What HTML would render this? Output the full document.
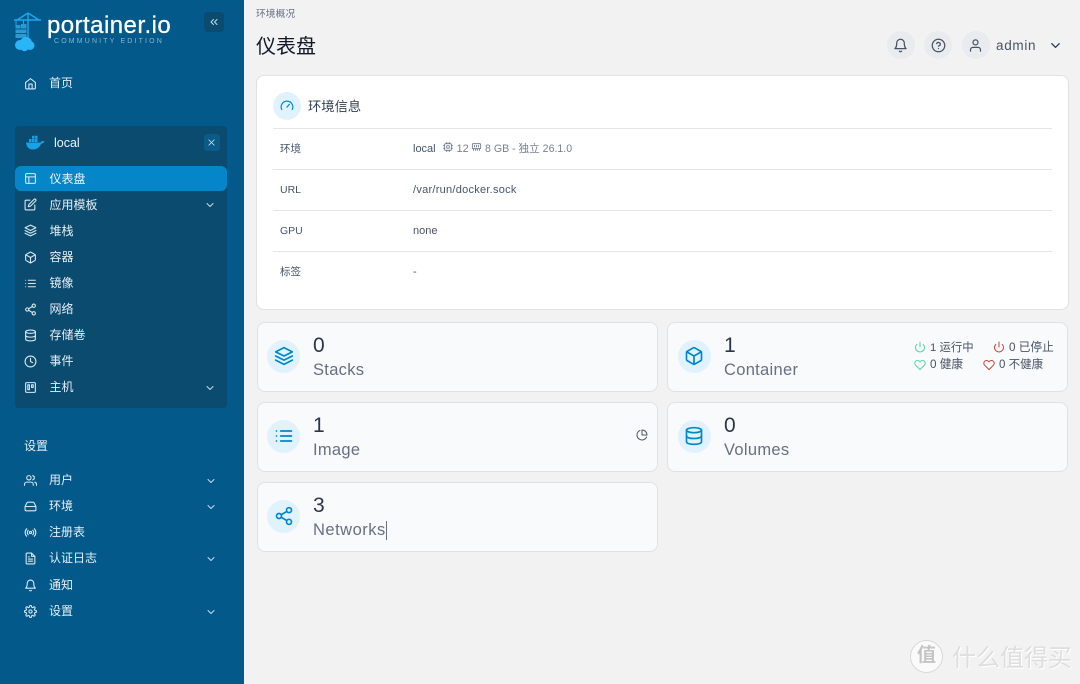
<!DOCTYPE html>
<html><head><meta charset="utf-8">
<style>
*{box-sizing:border-box}
html,body{margin:0;padding:0}
body{width:1080px;height:684px;overflow:hidden;background:#f2f2f2;position:relative;font-family:"Liberation Sans","Noto Sans CJK SC",sans-serif;color:#344054}
.a,.t,svg{position:absolute}
.t{white-space:nowrap;line-height:20px}
.n{color:#e6eff5;font-size:12px;left:49.5px;height:20px}
.i{fill:none;stroke:#dbe8f0;stroke-width:2;stroke-linecap:round;stroke-linejoin:round;width:13px;height:13px;left:23.5px}
.c{fill:none;stroke:#c9dce8;stroke-width:2;stroke-linecap:round;stroke-linejoin:round;width:12px;height:12px;left:204px}
.card{position:absolute;background:#f9fafb;border:1px solid #dfe1e5;border-radius:8px;width:401px;height:70px}
.circ{position:absolute;width:33px;height:33px;border-radius:50%;background:#e0f2fe}
.ci{fill:none;stroke:#0086c9;stroke-width:2;stroke-linecap:round;stroke-linejoin:round;width:20px;height:20px}
.num{font-size:21px;color:#2d3648;line-height:24px}
.lab{font-size:16.5px;color:#667085;line-height:22px;letter-spacing:.3px}
.hr{position:absolute;left:273px;width:779px;height:1px;background:#e4e5e8}
.k{font-size:10.5px;color:#475467;left:280px}
.v{font-size:11px;color:#475467;left:413px}
.s{font-size:11.5px;color:#475467}
.hb{position:absolute;width:28px;height:28px;border-radius:50%;background:#e9ebef;top:31px}
.hi{fill:none;stroke:#475467;stroke-width:2;stroke-linecap:round;stroke-linejoin:round;width:15px;height:15px}
.w{color:#dedede;font-weight:400;text-shadow:1px 1px 0 #fff}
</style></head><body>

<div class="a" style="left:0;top:0;width:244px;height:684px;background:#02598a"></div>
<div class="a" style="left:15px;top:126px;width:212px;height:282px;background:#0a4b6f;border-radius:4px"></div>
<div class="a" style="left:15px;top:166px;width:212px;height:25px;background:#0486c9;border-radius:6px"></div>

<!-- logo -->
<svg style="left:14px;top:12px;width:28px;height:40px" viewBox="0 0 28 40">
<path d="M0 8H27M14 1V26M14 1L3 8M14 1L25 8" fill="none" stroke="#1aa7ec" stroke-width="1.4"/>
<path d="M1.500 8h1v5h-1zM9 8h1v4H9z" fill="#1aa7ec"/>
<rect x="1.500" y="13" width="5" height="3.500" fill="#2a9ad4"/><rect x="7" y="12" width="5.500" height="4.500" fill="#2a9ad4"/><rect x="1.500" y="17.500" width="11" height="3.500" fill="#2a9ad4"/><rect x="1.500" y="22" width="11" height="4" fill="#2a9ad4"/>
<circle cx="6" cy="33" r="5" fill="#29b5f6"/><circle cx="12" cy="31" r="6" fill="#29b5f6"/><circle cx="16" cy="33.500" r="4.500" fill="#29b5f6"/><circle cx="10.500" cy="35.500" r="3.800" fill="#29b5f6"/>
</svg>
<div class="t" style="left:47px;top:12px;font-size:24px;line-height:28px;color:#fff;letter-spacing:.45px;-webkit-text-stroke:.3px #fff">portainer.io</div>
<div class="t" style="left:54px;top:37px;font-size:7px;line-height:10px;color:#8fb4cc;letter-spacing:2.15px">COMMUNITY EDITION</div>
<div class="a" style="left:204px;top:12px;width:20px;height:20px;border-radius:4px;background:#0a4b6f"></div>
<svg class="i" style="left:208px;top:16px;width:12px;height:12px;stroke:#c9dce8" viewBox="0 0 24 24"><path d="M11 17l-5-5 5-5M18 17l-5-5 5-5"/></svg>

<svg class="i" style="top:76.500px" viewBox="0 0 24 24"><path d="M3 10l9-7 9 7v10a2 2 0 0 1-2 2H5a2 2 0 0 1-2-2z"/><path d="M9 22v-9h6v9"/></svg>
<div class="t n" style="top:73px;left:49px">首页</div>

<!-- local -->
<svg style="left:26px;top:135px;width:19px;height:15px" viewBox="0 0 19 15"><path d="M0 7.500h14.500c.6-1.500 2-1.800 4-1.200-.8 1.700-2 2.400-3.400 2.500C13.800 12.500 10.500 14.500 7 14.500 2.500 14.500.3 11.500 0 7.500z" fill="#1aa0e6"/><path d="M3 4h2.500v3H3zM6 4h2.500v3H6zM9 4h2.500v3H9zM6 .8h2.500v3H6zM9 .8h2.500v3H9z" fill="#1aa0e6"/></svg>
<div class="t" style="left:54px;top:133px;font-size:12.5px;color:#eef4f8">local</div>
<div class="a" style="left:204px;top:134px;width:16px;height:17px;border-radius:3px;background:#0b5b88"></div>
<svg class="i" style="left:208px;top:139px;width:7px;height:7px;stroke:#c9dce8;stroke-width:3" viewBox="0 0 24 24"><path d="M3 3l18 18M21 3L3 21"/></svg>

<svg class="i" style="top:171.500px" viewBox="0 0 24 24"><rect x="3" y="3" width="18" height="18" rx="2"/><path d="M3 9h18M9 21V9"/></svg>
<div class="t n" style="top:169px;color:#f0f7fb">仪表盘</div>
<svg class="i" style="top:197.500px" viewBox="0 0 24 24"><path d="M11 4H4a2 2 0 0 0-2 2v14a2 2 0 0 0 2 2h14a2 2 0 0 0 2-2v-7"/><path d="M18.500 2.500a2.100 2.100 0 0 1 3 3L12 15l-4 1 1-4z"/></svg>
<div class="t n" style="top:195px">应用模板</div>
<svg class="c" style="top:199px" viewBox="0 0 24 24"><path d="M6 9l6 6 6-6"/></svg>
<svg class="i" style="top:223.500px" viewBox="0 0 24 24"><path d="M12 2L2 7l10 5 10-5z"/><path d="M2 12l10 5 10-5M2 17l10 5 10-5"/></svg>
<div class="t n" style="top:221px">堆栈</div>
<svg class="i" style="top:250.500px" viewBox="0 0 24 24"><path d="M21 16V8a2 2 0 0 0-1-1.700l-7-4a2 2 0 0 0-2 0l-7 4A2 2 0 0 0 3 8v8a2 2 0 0 0 1 1.700l7 4a2 2 0 0 0 2 0l7-4a2 2 0 0 0 1-1.700z"/><path d="M3.300 7L12 12l8.700-5M12 22V12"/></svg>
<div class="t n" style="top:247px">容器</div>
<svg class="i" style="top:276.500px" viewBox="0 0 24 24"><path d="M8 6h13M8 12h13M8 18h13M3 6h.01M3 12h.01M3 18h.01"/></svg>
<div class="t n" style="top:273px">镜像</div>
<svg class="i" style="top:302.500px" viewBox="0 0 24 24"><circle cx="18" cy="5" r="3"/><circle cx="6" cy="12" r="3"/><circle cx="18" cy="19" r="3"/><path d="M8.600 13.500l6.800 4M15.400 6.500l-6.800 4"/></svg>
<div class="t n" style="top:299px">网络</div>
<svg class="i" style="top:328.500px" viewBox="0 0 24 24"><ellipse cx="12" cy="5" rx="9" ry="3"/><path d="M21 12c0 1.700-4 3-9 3s-9-1.300-9-3"/><path d="M3 5v14c0 1.700 4 3 9 3s9-1.300 9-3V5"/></svg>
<div class="t n" style="top:325px">存储卷</div>
<svg class="i" style="top:354.500px" viewBox="0 0 24 24"><circle cx="12" cy="12" r="10"/><path d="M12 6v6l4 2"/></svg>
<div class="t n" style="top:351px">事件</div>
<svg class="i" style="top:380.500px" viewBox="0 0 24 24"><rect x="3" y="3" width="18" height="18" rx="2"/><path d="M7 7h3v9H7zM14 7h3v5h-3z"/></svg>
<div class="t n" style="top:377px">主机</div>
<svg class="c" style="top:382px" viewBox="0 0 24 24"><path d="M6 9l6 6 6-6"/></svg>

<div class="t n" style="left:24px;top:436px">设置</div>

<svg class="i" style="top:473.500px" viewBox="0 0 24 24"><path d="M17 21v-2a4 4 0 0 0-4-4H5a4 4 0 0 0-4 4v2"/><circle cx="9" cy="7" r="4"/><path d="M23 21v-2a4 4 0 0 0-3-3.900M16 3.100a4 4 0 0 1 0 7.800"/></svg>
<div class="t n" style="top:470px;left:49px">用户</div>
<svg class="c" style="left:205px;top:475px" viewBox="0 0 24 24"><path d="M6 9l6 6 6-6"/></svg>
<svg class="i" style="top:499.500px" viewBox="0 0 24 24"><path d="M22 12H2M5.500 5L2 12v6a2 2 0 0 0 2 2h16a2 2 0 0 0 2-2v-6l-3.500-7A2 2 0 0 0 16.700 4H7.300a2 2 0 0 0-1.800 1z"/></svg>
<div class="t n" style="top:496px;left:49px">环境</div>
<svg class="c" style="left:205px;top:501px" viewBox="0 0 24 24"><path d="M6 9l6 6 6-6"/></svg>
<svg class="i" style="top:526px" viewBox="0 0 24 24"><circle cx="12" cy="12" r="2"/><path d="M16.200 7.800a6 6 0 0 1 0 8.400M7.800 16.200a6 6 0 0 1 0-8.400M19 5a10 10 0 0 1 0 14M5 19A10 10 0 0 1 5 5"/></svg>
<div class="t n" style="top:522px;left:49px">注册表</div>
<svg class="i" style="top:552px" viewBox="0 0 24 24"><path d="M14 2H6a2 2 0 0 0-2 2v16a2 2 0 0 0 2 2h12a2 2 0 0 0 2-2V8z"/><path d="M14 2v6h6M16 13H8M16 17H8M10 9H8"/></svg>
<div class="t n" style="top:548px;left:49px">认证日志</div>
<svg class="c" style="left:205px;top:553px" viewBox="0 0 24 24"><path d="M6 9l6 6 6-6"/></svg>
<svg class="i" style="top:578.500px" viewBox="0 0 24 24"><path d="M18 8a6 6 0 0 0-12 0c0 7-3 9-3 9h18s-3-2-3-9"/><path d="M13.700 21a2 2 0 0 1-3.400 0"/></svg>
<div class="t n" style="top:575px;left:49px">通知</div>
<svg class="i" style="top:604.500px" viewBox="0 0 24 24"><circle cx="12" cy="12" r="3"/><path d="M19.400 15a1.700 1.700 0 0 0 .3 1.800l.1.100a2 2 0 1 1-2.800 2.800l-.1-.1a1.700 1.700 0 0 0-2.900 1.200V21a2 2 0 1 1-4 0v-.1a1.700 1.700 0 0 0-2.900-1.200l-.1.100a2 2 0 1 1-2.800-2.800l.1-.1a1.700 1.700 0 0 0-1.200-2.900H3a2 2 0 1 1 0-4h.1a1.700 1.700 0 0 0 1.200-2.900l-.1-.1a2 2 0 1 1 2.800-2.800l.1.100a1.700 1.700 0 0 0 2.900-1.200V3a2 2 0 1 1 4 0v.1a1.700 1.700 0 0 0 2.900 1.200l.1-.1a2 2 0 1 1 2.800 2.800l-.1.100a1.700 1.700 0 0 0 1.200 2.900h.1a2 2 0 1 1 0 4h-.1a1.700 1.700 0 0 0-1.500 1z"/></svg>
<div class="t n" style="top:601px;left:49px">设置</div>
<svg class="c" style="left:205px;top:606px" viewBox="0 0 24 24"><path d="M6 9l6 6 6-6"/></svg>

<!-- header -->
<div class="t" style="left:256px;top:5px;font-size:9.800px;color:#667085">环境概况</div>
<div class="t" style="left:256px;top:32px;font-size:20px;line-height:30px;color:#111827">仪表盘</div>
<div class="hb" style="left:887px"></div>
<svg class="hi" style="left:893px;top:38px" viewBox="0 0 24 24"><path d="M18 8a6 6 0 0 0-12 0c0 7-3 9-3 9h18s-3-2-3-9"/><path d="M13.700 21a2 2 0 0 1-3.400 0"/></svg>
<div class="hb" style="left:924px"></div>
<svg class="hi" style="left:931px;top:38px" viewBox="0 0 24 24"><circle cx="12" cy="12" r="10"/><path d="M9.100 9a3 3 0 0 1 5.800 1c0 2-3 3-3 3M12 17h.01"/></svg>
<div class="hb" style="left:962px"></div>
<svg class="hi" style="left:968px;top:38px" viewBox="0 0 24 24"><path d="M20 21v-2a4 4 0 0 0-4-4H8a4 4 0 0 0-4 4v2"/><circle cx="12" cy="7" r="4"/></svg>
<div class="t" style="left:996px;top:36px;font-size:13.500px;color:#475467;letter-spacing:.7px">admin</div>
<svg class="hi" style="left:1048px;top:38px;stroke:#344054" viewBox="0 0 24 24"><path d="M6 9l6 6 6-6"/></svg>

<!-- env card -->
<div class="a" style="left:256px;top:75px;width:813px;height:235px;background:#fff;border:1px solid #dfe1e5;border-radius:8px"></div>
<div class="circ" style="left:273px;top:92px;width:28px;height:28px"></div>
<svg class="ci" style="left:280px;top:99px;width:14px;height:14px" viewBox="0 0 24 24"><path d="M3 18a10 10 0 1 1 18 0M12 14l4-5"/></svg>
<div class="t" style="left:308px;top:96px;font-size:13.300px;line-height:21px;color:#344054">环境信息</div>
<div class="hr" style="top:128px"></div>
<div class="hr" style="top:169px"></div>
<div class="hr" style="top:210px"></div>
<div class="hr" style="top:251px"></div>
<div class="t k" style="top:139px">环境</div>
<div class="t k" style="top:180px">URL</div>
<div class="t k" style="top:221px">GPU</div>
<div class="t k" style="top:262px">标签</div>
<div class="t v" style="top:139px">local</div>
<svg class="hi" style="left:443px;top:142px;width:10px;height:10px;stroke:#667085" viewBox="0 0 24 24"><rect x="4" y="4" width="16" height="16" rx="2"/><rect x="9" y="9" width="6" height="6"/><path d="M9 1v3M15 1v3M9 20v3M15 20v3M1 9h3M1 15h3M20 9h3M20 15h3"/></svg>
<div class="t v" style="left:456.500px;top:139px;color:#7a828f">12</div>
<svg class="hi" style="left:471px;top:142px;width:11px;height:10px;stroke:#667085" viewBox="0 0 24 24"><rect x="2" y="4" width="20" height="12" rx="2"/><path d="M7 8v4M12 8v4M17 8v4M5 20v-3M10 20v-3M14 20v-3M19 20v-3"/></svg>
<div class="t v" style="left:485px;top:139px;font-size:10.600px;color:#7a828f">8 GB - 独立 26.1.0</div>
<div class="t v" style="top:180px;letter-spacing:.26px">/var/run/docker.sock</div>
<div class="t v" style="top:221px">none</div>
<div class="t v" style="top:262px">-</div>

<!-- cards -->
<div class="card" style="left:257px;top:322px"></div>
<div class="circ" style="left:267px;top:340px"></div>
<svg class="ci" style="left:274px;top:346px" viewBox="0 0 24 24"><path d="M12 2L2 7l10 5 10-5z"/><path d="M2 12l10 5 10-5M2 17l10 5 10-5"/></svg>
<div class="t num" style="left:313px;top:334px">0</div>
<div class="t lab" style="left:313px;top:359px">Stacks</div>

<div class="card" style="left:667px;top:322px"></div>
<div class="circ" style="left:678px;top:340px"></div>
<svg class="ci" style="left:684px;top:346px" viewBox="0 0 24 24"><path d="M21 16V8a2 2 0 0 0-1-1.700l-7-4a2 2 0 0 0-2 0l-7 4A2 2 0 0 0 3 8v8a2 2 0 0 0 1 1.700l7 4a2 2 0 0 0 2 0l7-4a2 2 0 0 0 1-1.700z"/><path d="M3.300 7L12 12l8.700-5M12 22V12"/></svg>
<div class="t num" style="left:724px;top:334px">1</div>
<div class="t lab" style="left:724px;top:359px">Container</div>
<svg class="hi" style="left:914px;top:341px;width:12px;height:12px;stroke:#4fd69c" viewBox="0 0 24 24"><path d="M18.400 6.600a9 9 0 1 1-12.800 0M12 2v10"/></svg>
<div class="t s" style="left:930px;top:338px;font-size:11.400px">1 运行中</div>
<svg class="hi" style="left:993px;top:341px;width:12px;height:12px;stroke:#c4423a" viewBox="0 0 24 24"><path d="M18.400 6.600a9 9 0 1 1-12.800 0M12 2v10"/></svg>
<div class="t s" style="left:1009px;top:338px;font-size:11.700px">0 已停止</div>
<svg class="hi" style="left:914px;top:359px;width:12px;height:12px;stroke:#4fd69c" viewBox="0 0 24 24"><path d="M20.800 4.600a5.500 5.500 0 0 0-7.800 0L12 5.700l-1-1.100a5.500 5.500 0 0 0-7.800 7.800L12 21.200l8.800-8.800a5.500 5.500 0 0 0 0-7.800z"/></svg>
<div class="t s" style="left:930px;top:355px;font-size:11.700px">0 健康</div>
<svg class="hi" style="left:983px;top:359px;width:12px;height:12px;stroke:#c4423a" viewBox="0 0 24 24"><path d="M20.800 4.600a5.500 5.500 0 0 0-7.800 0L12 5.700l-1-1.100a5.500 5.500 0 0 0-7.800 7.800L12 21.200l8.800-8.800a5.500 5.500 0 0 0 0-7.800z"/></svg>
<div class="t s" style="left:999px;top:355px">0 不健康</div>

<div class="card" style="left:257px;top:402px"></div>
<div class="circ" style="left:267px;top:420px"></div>
<svg class="ci" style="left:274px;top:426px" viewBox="0 0 24 24"><path d="M8 6h13M8 12h13M8 18h13M3 6h.01M3 12h.01M3 18h.01"/></svg>
<div class="t num" style="left:313px;top:414px">1</div>
<div class="t lab" style="left:313px;top:439px">Image</div>
<svg class="hi" style="left:636px;top:429px;width:12px;height:12px;stroke:#475467" viewBox="0 0 24 24"><path d="M21.200 15.900A10 10 0 1 1 8 2.800"/><path d="M22 12A10 10 0 0 0 12 2v10z"/></svg>

<div class="card" style="left:667px;top:402px"></div>
<div class="circ" style="left:678px;top:420px"></div>
<svg class="ci" style="left:684px;top:426px" viewBox="0 0 24 24"><ellipse cx="12" cy="5" rx="9" ry="3"/><path d="M21 12c0 1.700-4 3-9 3s-9-1.300-9-3"/><path d="M3 5v14c0 1.700 4 3 9 3s9-1.300 9-3V5"/></svg>
<div class="t num" style="left:724px;top:414px">0</div>
<div class="t lab" style="left:724px;top:439px">Volumes</div>

<div class="card" style="left:257px;top:482px"></div>
<div class="circ" style="left:267px;top:500px"></div>
<svg class="ci" style="left:274px;top:506px" viewBox="0 0 24 24"><circle cx="18" cy="5" r="3"/><circle cx="6" cy="12" r="3"/><circle cx="18" cy="19" r="3"/><path d="M8.600 13.500l6.800 4M15.400 6.500l-6.800 4"/></svg>
<div class="t num" style="left:313px;top:494px">3</div>
<div class="t lab" style="left:313px;top:519px;letter-spacing:.5px">Networks</div>
<div class="a" style="left:386px;top:521px;width:1px;height:19px;background:#667085"></div>

<!-- watermark -->
<div class="a" style="left:910px;top:640px;width:33px;height:33px;border-radius:50%;background:#fafafa;border:1px solid #d8d8d8"></div>
<div class="t" style="left:917px;top:646px;font-size:19px;color:#c4c4c4;font-weight:700">值</div>
<div class="t w" style="left:952px;top:649px;font-size:24px">什么值得买</div>
</body></html>
